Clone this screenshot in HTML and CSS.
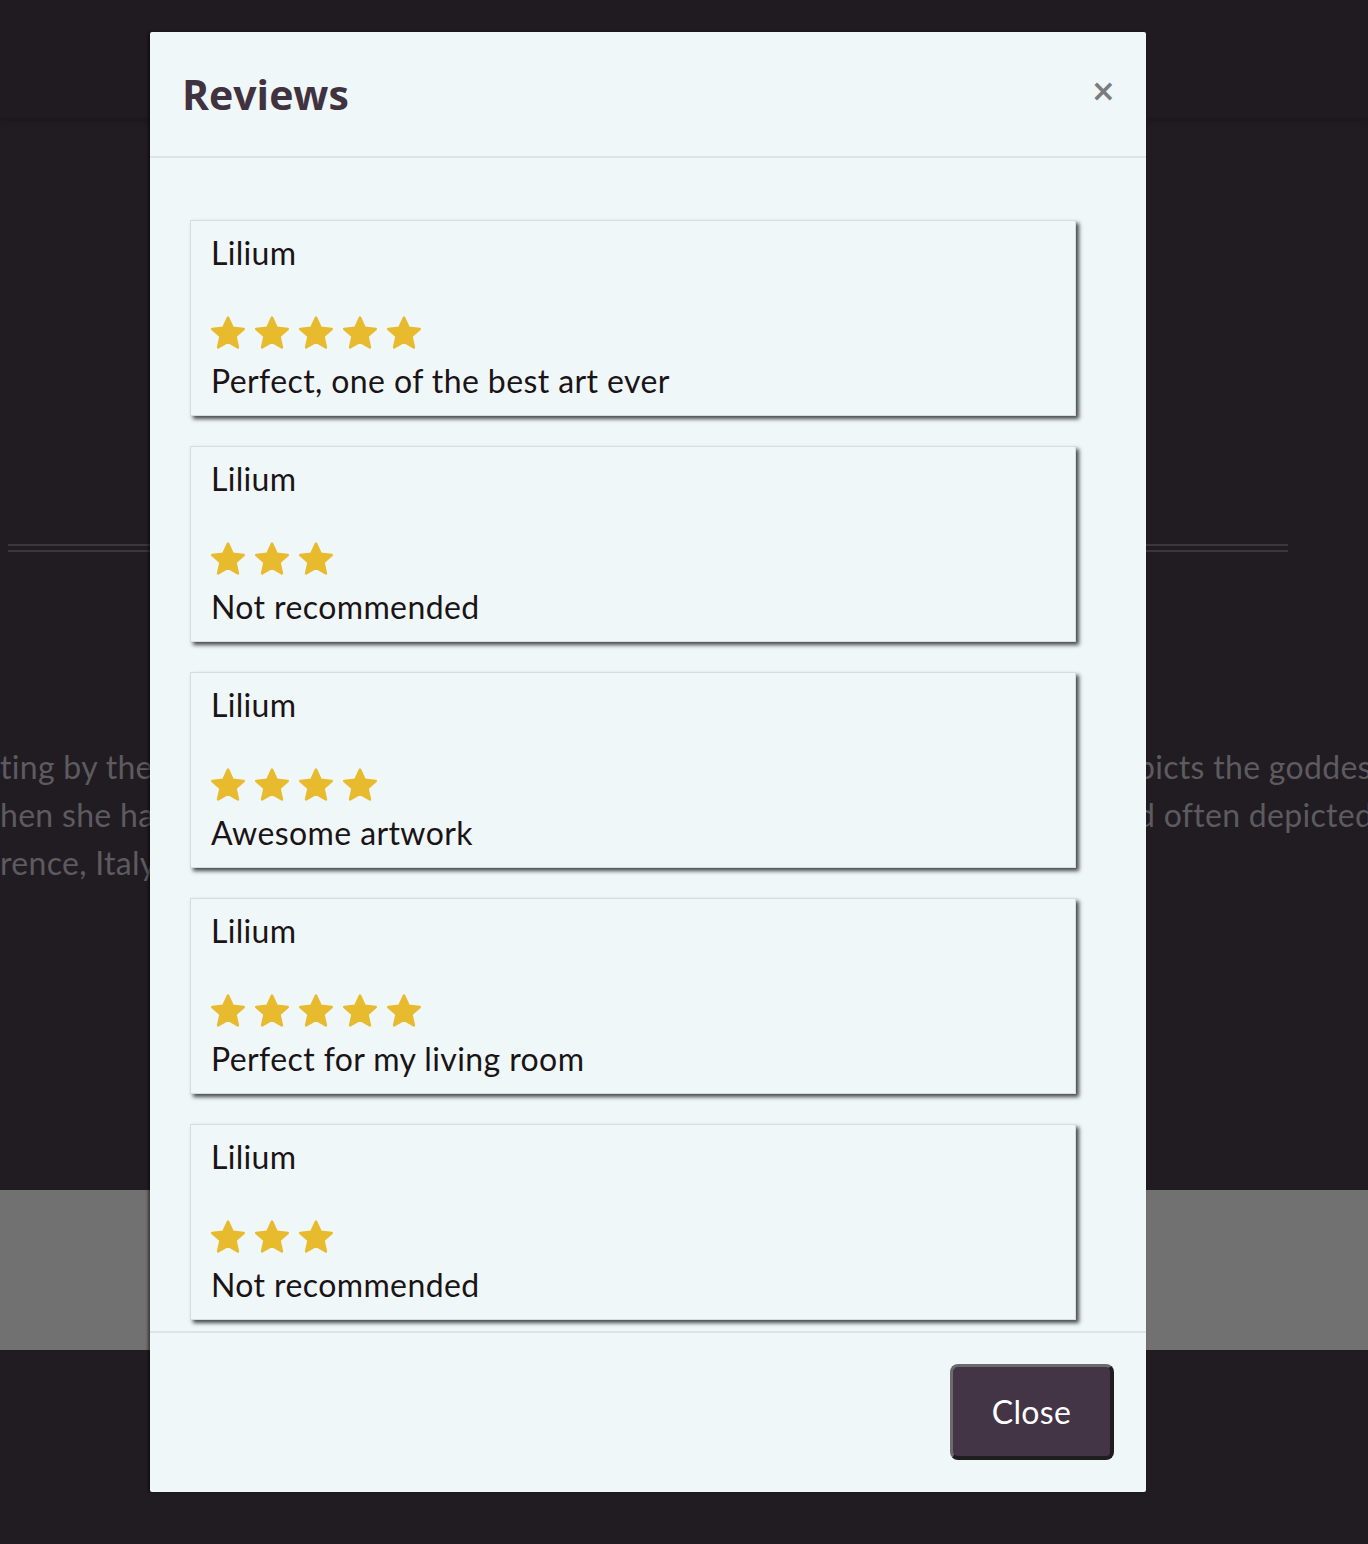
FILE: index.html
```html
<!DOCTYPE html>
<html lang="en">
<head>
<meta charset="utf-8">
<title>Reviews</title>
<link rel="stylesheet" href="styles.css">
</head>
<body>
<div class="page">
  <header class="site-header"></header>
  <div class="hr-wrap"><div class="double-rule"></div></div>
  <div class="about">
    <div class="about-left">
      <p>ting by the Italian artist</p>
      <p>hen she had just</p>
      <p>rence, Italy</p>
    </div>
    <div class="about-right">
      <p>picts the goddess</p>
      <p>d often depicted</p>
    </div>
  </div>
  <div class="gray-band"></div>
</div>

<div class="modal">
  <div class="modal-header">
    <h2 class="modal-title">Reviews</h2>
    <button class="modal-x" type="button">×</button>
  </div>
  <div class="modal-body">
    <div class="review">
      <div class="review-name">Lilium</div>
      <div class="stars">
        <svg class="star" viewBox="1.5 1.7 21 20"><path d="M12 2.5l2.9 6.3 6.8.7-5.1 4.6 1.5 6.8L12 17.4l-6.1 3.5 1.5-6.8-5.1-4.6 6.8-.7z"/></svg>
        <svg class="star" viewBox="1.5 1.7 21 20"><path d="M12 2.5l2.9 6.3 6.8.7-5.1 4.6 1.5 6.8L12 17.4l-6.1 3.5 1.5-6.8-5.1-4.6 6.8-.7z"/></svg>
        <svg class="star" viewBox="1.5 1.7 21 20"><path d="M12 2.5l2.9 6.3 6.8.7-5.1 4.6 1.5 6.8L12 17.4l-6.1 3.5 1.5-6.8-5.1-4.6 6.8-.7z"/></svg>
        <svg class="star" viewBox="1.5 1.7 21 20"><path d="M12 2.5l2.9 6.3 6.8.7-5.1 4.6 1.5 6.8L12 17.4l-6.1 3.5 1.5-6.8-5.1-4.6 6.8-.7z"/></svg>
        <svg class="star" viewBox="1.5 1.7 21 20"><path d="M12 2.5l2.9 6.3 6.8.7-5.1 4.6 1.5 6.8L12 17.4l-6.1 3.5 1.5-6.8-5.1-4.6 6.8-.7z"/></svg>
      </div>
      <div class="review-text">Perfect, one of the best art ever</div>
    </div>
    <div class="review">
      <div class="review-name">Lilium</div>
      <div class="stars">
        <svg class="star" viewBox="1.5 1.7 21 20"><path d="M12 2.5l2.9 6.3 6.8.7-5.1 4.6 1.5 6.8L12 17.4l-6.1 3.5 1.5-6.8-5.1-4.6 6.8-.7z"/></svg>
        <svg class="star" viewBox="1.5 1.7 21 20"><path d="M12 2.5l2.9 6.3 6.8.7-5.1 4.6 1.5 6.8L12 17.4l-6.1 3.5 1.5-6.8-5.1-4.6 6.8-.7z"/></svg>
        <svg class="star" viewBox="1.5 1.7 21 20"><path d="M12 2.5l2.9 6.3 6.8.7-5.1 4.6 1.5 6.8L12 17.4l-6.1 3.5 1.5-6.8-5.1-4.6 6.8-.7z"/></svg>
      </div>
      <div class="review-text">Not recommended</div>
    </div>
    <div class="review">
      <div class="review-name">Lilium</div>
      <div class="stars">
        <svg class="star" viewBox="1.5 1.7 21 20"><path d="M12 2.5l2.9 6.3 6.8.7-5.1 4.6 1.5 6.8L12 17.4l-6.1 3.5 1.5-6.8-5.1-4.6 6.8-.7z"/></svg>
        <svg class="star" viewBox="1.5 1.7 21 20"><path d="M12 2.5l2.9 6.3 6.8.7-5.1 4.6 1.5 6.8L12 17.4l-6.1 3.5 1.5-6.8-5.1-4.6 6.8-.7z"/></svg>
        <svg class="star" viewBox="1.5 1.7 21 20"><path d="M12 2.5l2.9 6.3 6.8.7-5.1 4.6 1.5 6.8L12 17.4l-6.1 3.5 1.5-6.8-5.1-4.6 6.8-.7z"/></svg>
        <svg class="star" viewBox="1.5 1.7 21 20"><path d="M12 2.5l2.9 6.3 6.8.7-5.1 4.6 1.5 6.8L12 17.4l-6.1 3.5 1.5-6.8-5.1-4.6 6.8-.7z"/></svg>
      </div>
      <div class="review-text">Awesome artwork</div>
    </div>
    <div class="review">
      <div class="review-name">Lilium</div>
      <div class="stars">
        <svg class="star" viewBox="1.5 1.7 21 20"><path d="M12 2.5l2.9 6.3 6.8.7-5.1 4.6 1.5 6.8L12 17.4l-6.1 3.5 1.5-6.8-5.1-4.6 6.8-.7z"/></svg>
        <svg class="star" viewBox="1.5 1.7 21 20"><path d="M12 2.5l2.9 6.3 6.8.7-5.1 4.6 1.5 6.8L12 17.4l-6.1 3.5 1.5-6.8-5.1-4.6 6.8-.7z"/></svg>
        <svg class="star" viewBox="1.5 1.7 21 20"><path d="M12 2.5l2.9 6.3 6.8.7-5.1 4.6 1.5 6.8L12 17.4l-6.1 3.5 1.5-6.8-5.1-4.6 6.8-.7z"/></svg>
        <svg class="star" viewBox="1.5 1.7 21 20"><path d="M12 2.5l2.9 6.3 6.8.7-5.1 4.6 1.5 6.8L12 17.4l-6.1 3.5 1.5-6.8-5.1-4.6 6.8-.7z"/></svg>
        <svg class="star" viewBox="1.5 1.7 21 20"><path d="M12 2.5l2.9 6.3 6.8.7-5.1 4.6 1.5 6.8L12 17.4l-6.1 3.5 1.5-6.8-5.1-4.6 6.8-.7z"/></svg>
      </div>
      <div class="review-text">Perfect for my living room</div>
    </div>
    <div class="review">
      <div class="review-name">Lilium</div>
      <div class="stars">
        <svg class="star" viewBox="1.5 1.7 21 20"><path d="M12 2.5l2.9 6.3 6.8.7-5.1 4.6 1.5 6.8L12 17.4l-6.1 3.5 1.5-6.8-5.1-4.6 6.8-.7z"/></svg>
        <svg class="star" viewBox="1.5 1.7 21 20"><path d="M12 2.5l2.9 6.3 6.8.7-5.1 4.6 1.5 6.8L12 17.4l-6.1 3.5 1.5-6.8-5.1-4.6 6.8-.7z"/></svg>
        <svg class="star" viewBox="1.5 1.7 21 20"><path d="M12 2.5l2.9 6.3 6.8.7-5.1 4.6 1.5 6.8L12 17.4l-6.1 3.5 1.5-6.8-5.1-4.6 6.8-.7z"/></svg>
      </div>
      <div class="review-text">Not recommended</div>
    </div>
  </div>
  <div class="modal-footer">
    <button class="btn-close" type="button">Close</button>
  </div>
</div>
</body>
</html>
```

FILE: styles.css
```css
* { box-sizing: border-box; }

html, body {
  margin: 0;
  padding: 0;
}

body {
  background: #211c22;
  font-family: "Lato", "Open Sans", sans-serif;
  width: 1368px;
  height: 1544px;
  overflow: hidden;
}

.page {
  display: flex;
  flex-direction: column;
}

.site-header {
  height: 118px;
  background: #201b21;
  box-shadow: 0 2px 6px rgba(0, 0, 0, 0.25);
}

.hr-wrap {
  padding: 426px 0 0 8px;
}

.double-rule {
  width: 1280px;
  height: 8px;
  border-top: 2px solid #3b373d;
  border-bottom: 2px solid #3b373d;
}

.about {
  display: flex;
  margin-top: 191px;
  height: 447px;
}

.about p {
  margin: 0;
  font-size: 32px;
  line-height: 48px;
  letter-spacing: 0.3px;
  color: #5d5a60;
  white-space: nowrap;
}

.about-left {
  width: 160px;
}

.about-right {
  margin-left: 977px;
}

.gray-band {
  height: 160px;
  background: #717171;
}

/* Modal */
.modal {
  position: absolute;
  left: 150px;
  top: 32px;
  width: 996px;
  height: 1460px;
  background: #eff7f9;
  border-radius: 2px;
  box-shadow: -2px 0 3px rgba(0, 0, 0, 0.5);
  display: flex;
  flex-direction: column;
}

.modal-header {
  flex: none;
  height: 126px;
  border-bottom: 2px solid #dfe3e6;
  display: flex;
  align-items: center;
  justify-content: space-between;
  padding: 0 30px 0 32px;
}

.modal-title {
  margin: 0;
  font-family: "Open Sans", "Lato", sans-serif;
  font-weight: 700;
  font-size: 41px;
  line-height: 48px;
  color: #41323f;
}

.modal-x {
  border: 0;
  background: none;
  padding: 0;
  font-family: "DejaVu Sans", sans-serif;
  font-weight: 700;
  font-size: 30px;
  line-height: 1;
  color: #7c7c7e;
  margin-top: -6px;
}

.modal-body {
  flex: none;
  height: 1173px;
  overflow: hidden;
  padding: 62px 70px 0 40px;
  display: flex;
  flex-direction: column;
  gap: 30px;
}

.review {
  flex: none;
  height: 196px;
  background: #eff7f9;
  border: 1px solid #d9dcdd;
  box-shadow: 3px 3px 4px rgba(0, 0, 0, 0.7);
  padding: 8px 20px 10px;
  color: #1b1416;
}

.review-name {
  font-size: 32px;
  line-height: 48px;
  letter-spacing: 0.3px;
}

.stars {
  display: flex;
  gap: 10px;
  margin-top: 39px;
  height: 33px;
}

.star {
  width: 34px;
  height: 33px;
  fill: #e8bb2f;
  stroke: #e8bb2f;
  stroke-width: 1.6;
  stroke-linejoin: round;
}

.review-text {
  margin-top: 8px;
  font-size: 32px;
  line-height: 48px;
  letter-spacing: 0.4px;
}

.modal-footer {
  flex: 1;
  border-top: 2px solid #dfe3e6;
  display: flex;
  justify-content: flex-end;
  align-items: flex-start;
  padding: 31px 32px 0 0;
}

.btn-close {
  width: 164px;
  height: 96px;
  background: #433446;
  color: #ffffff;
  font-family: "Lato", "Open Sans", sans-serif;
  font-size: 32px;
  letter-spacing: 0.3px;
  border-radius: 8px;
  border-style: solid;
  border-color: #6b6b6b #1e1e1e #1e1e1e #6b6b6b;
  border-width: 3px 4px 4px 3px;
  padding: 0;
}
```
